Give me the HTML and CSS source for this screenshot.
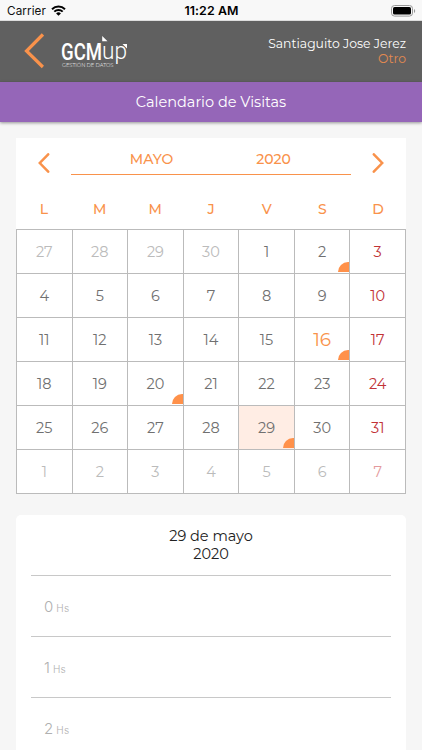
FILE: index.html
```html
<!DOCTYPE html>
<html lang="es">
<head>
    <meta charset="UTF-8">
    <meta name="viewport" content="width=device-width, initial-scale=1.0">
    <title>Calendario de Visitas</title>
    <link rel="stylesheet" href="styles.css">
</head>
<body>
    <div class="status-bar">
        <div class="carrier">
            <span>Carrier</span>
            <svg class="wifi" viewBox="0 0 15 11" width="15" height="11">
                <path d="M1 4.2a9.3 9.3 0 0 1 13 0M3.3 6.6a6 6 0 0 1 8.4 0" fill="none" stroke="#000" stroke-width="2"/>
                <path d="M7.5 10.8L5.1 8.4a3.4 3.4 0 0 1 4.8 0z"/>
            </svg>
        </div>
        <div class="clock">11:22 AM</div>
        <svg class="battery" viewBox="0 0 25 12" width="25" height="12">
            <rect x="0.5" y="0.5" width="21" height="10.6" rx="3" fill="none" stroke="#999"/>
            <rect x="2" y="2" width="18" height="7.6" rx="1.6"/>
            <path d="M23 4v4c1.6-.6 1.6-3.4 0-4z" fill="#999"/>
        </svg>
    </div>

    <header class="header">
        <svg class="back" viewBox="0 0 20 36" width="20" height="36">
            <path d="M18.9 1.5L2.5 18l16.4 16" fill="none" stroke="#f9924b" stroke-width="3.2"/>
        </svg>
        <svg class="logo" viewBox="0 0 68 34" width="68" height="34">
            <text class="logo-main" x="0" y="24" textLength="41" lengthAdjust="spacingAndGlyphs">GCM</text>
            <text class="logo-up" x="41" y="22.7" textLength="25" lengthAdjust="spacingAndGlyphs">up</text>
            <path d="M41.2 0l5.3 5.2h-5.3zM61.5 8h4.5v4.5z" fill="#fff"/>
            <text class="logo-sub" x="1" y="31" textLength="51.5" lengthAdjust="spacing">GESTIÓN DE DATOS</text>
        </svg>
        <div class="user">
            <div class="user-name">Santiaguito Jose Jerez</div>
            <div class="user-role">Otro</div>
        </div>
    </header>

    <div class="title-bar">Calendario de Visitas</div>

    <div class="calendar">
        <div class="month-nav">
            <svg class="arrow" viewBox="0 0 12 20" width="12" height="20">
                <path d="M10.2 1.3L1.8 10l8.4 8.7" fill="none" stroke="#f9924b" stroke-width="2.5" stroke-linecap="round"/>
            </svg>
            <div class="month-box">
                <span class="month">MAYO</span>
                <span class="year">2020</span>
            </div>
            <svg class="arrow" viewBox="0 0 12 20" width="12" height="20">
                <path d="M1.8 1.3L10.2 10l-8.4 8.7" fill="none" stroke="#f9924b" stroke-width="2.5" stroke-linecap="round"/>
            </svg>
        </div>
        <div class="weekdays">
            <span>L</span><span>M</span><span>M</span><span>J</span><span>V</span><span>S</span><span>D</span>
        </div>
        <div class="days">
            <div class="day out">27</div>
            <div class="day out">28</div>
            <div class="day out">29</div>
            <div class="day out">30</div>
            <div class="day">1</div>
            <div class="day visit">2</div>
            <div class="day sunday">3</div>

            <div class="day">4</div>
            <div class="day">5</div>
            <div class="day">6</div>
            <div class="day">7</div>
            <div class="day">8</div>
            <div class="day">9</div>
            <div class="day sunday">10</div>

            <div class="day">11</div>
            <div class="day">12</div>
            <div class="day">13</div>
            <div class="day">14</div>
            <div class="day">15</div>
            <div class="day today visit">16</div>
            <div class="day sunday">17</div>

            <div class="day">18</div>
            <div class="day">19</div>
            <div class="day visit">20</div>
            <div class="day">21</div>
            <div class="day">22</div>
            <div class="day">23</div>
            <div class="day sunday">24</div>

            <div class="day">25</div>
            <div class="day">26</div>
            <div class="day">27</div>
            <div class="day">28</div>
            <div class="day selected visit">29</div>
            <div class="day">30</div>
            <div class="day sunday">31</div>

            <div class="day out">1</div>
            <div class="day out">2</div>
            <div class="day out">3</div>
            <div class="day out">4</div>
            <div class="day out">5</div>
            <div class="day out">6</div>
            <div class="day sunday out">7</div>
        </div>
    </div>

    <div class="agenda">
        <div class="agenda-date">29 de mayo<br>2020</div>
        <div class="hour"><span class="hour-number">0</span><span class="hs">Hs</span></div>
        <div class="hour"><span class="hour-number">1</span><span class="hs">Hs</span></div>
        <div class="hour"><span class="hour-number">2</span><span class="hs">Hs</span></div>
    </div>
</body>
</html>
```
FILE: styles.css
```css
* {
    box-sizing: border-box;
}
body {
    font-family: Montserrat, Inter, sans-serif;
    background-color: #f6f6f6;
    margin: 0;
    height: 750px;
    overflow: hidden;
}

/* status bar */
.status-bar {
    display: grid;
    grid-template-columns: 1fr auto 1fr;
    align-items: center;
    height: 21px;
    padding: 1px 6px 0 7px;
    background-color: #f8f8f8;
    border-bottom: 1px solid #ddd;
    font-family: Inter, sans-serif;
    font-size: 11.7px;
    color: #111;
}
.carrier {
    display: flex;
    align-items: center;
    gap: 5px;
}
.carrier span {
    letter-spacing: 0.1px;
}
.clock {
    font-weight: 600;
    font-size: 12.4px;
    letter-spacing: 0.1px;
    color: #000;
}
.battery {
    justify-self: end;
}

/* header */
.header {
    display: flex;
    align-items: flex-start;
    height: 61px;
    padding: 12px 16px 0 24px;
    background-color: #606060;
}
.logo {
    margin: 3px 0 0 17px;
}
.logo text {
    fill: #fff;
    font-family: Roboto, sans-serif;
}
.logo .logo-main {
    font-size: 24px;
    font-weight: 500;
}
.logo .logo-up {
    font-size: 24px;
    font-weight: 300;
}
.logo .logo-sub {
    font-family: Montserrat, sans-serif;
    font-size: 5.2px;
    fill: #ddd;
}
.user {
    margin-left: auto;
    padding-top: 3px;
    text-align: right;
    font-size: 12.4px;
    line-height: 15px;
}
.user-name {
    color: #fff;
}
.user-role {
    color: #e38a50;
}
.title-bar {
    height: 40px;
    line-height: 40px;
    background-color: #9566b8;
    color: #fff;
    text-align: center;
    font-size: 14.5px;
    box-shadow: 0 1px 3px rgba(0, 0, 0, 0.4);
}

/* calendar */
.calendar {
    margin: 16px 16px 0;
    background-color: #fff;
    color: #f9924b;
}
.month-nav {
    display: flex;
    justify-content: space-between;
    height: 37px;
    padding: 0 22px;
}
.arrow {
    margin-top: 15px;
}
.month-box {
    display: flex;
    width: 280px;
    padding-top: 12px;
    border-bottom: 1px solid #f9924b;
    font-size: 14px;
    font-weight: 500;
    line-height: 18px;
}
.month {
    width: 161px;
    text-align: center;
}
.year {
    width: 83px;
    text-align: center;
}
.weekdays {
    display: grid;
    grid-template-columns: repeat(7, 1fr);
    height: 54px;
    line-height: 68px;
    font-size: 14px;
    font-weight: 500;
    text-align: center;
}
.days {
    display: grid;
    grid-template-columns: repeat(7, 1fr);
    border-top: 1px solid #bbb;
    border-left: 1px solid #bbb;
}
.day {
    position: relative;
    height: 44px;
    line-height: 44px;
    border-right: 1px solid #bbb;
    border-bottom: 1px solid #bbb;
    font-size: 14.5px;
    color: #707070;
    text-align: center;
}
.out {
    color: #bbb;
}
.sunday {
    color: #c13236;
}
.sunday.out {
    color: #e49a9d;
}
.today {
    font-size: 18.5px;
    color: #f9924b;
}
.selected {
    background-color: #ffede4;
}
.visit::after {
    content: "";
    position: absolute;
    right: 0;
    bottom: 1px;
    width: 11px;
    height: 10px;
    border-top-left-radius: 10px;
    background-color: #ff914a;
}

/* agenda */
.agenda {
    height: 260px;
    margin: 21px 16px 0;
    padding: 12px 15px 0;
    background-color: #fff;
    border-radius: 5px 5px 0 0;
}
.agenda-date {
    height: 48px;
    text-align: center;
    font-size: 14.5px;
    line-height: 18px;
    color: #222;
}
.hour {
    display: flex;
    align-items: baseline;
    gap: 3px;
    height: 61px;
    padding-left: 13px;
    border-top: 1px solid #c8c8c8;
    font-family: Inter, sans-serif;
    font-weight: 300;
    line-height: 61px;
    color: #b0b0b0;
}
.hour-number {
    font-size: 15px;
}
.hs {
    font-size: 10px;
    letter-spacing: 0.3px;
}
```
